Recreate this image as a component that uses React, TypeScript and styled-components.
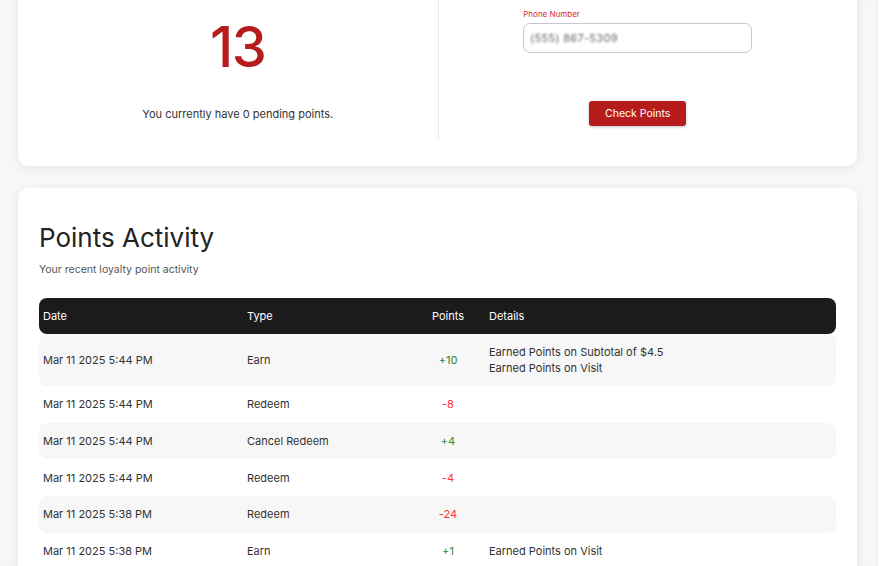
import styled, { createGlobalStyle } from 'styled-components';

const GlobalStyle = createGlobalStyle`
  html, body {
    margin: 0;
    padding: 0;
    height: 100%;
    overflow: hidden;
  }
  body {
    font-family: Inter, 'Liberation Sans', sans-serif;
    color: #333;
    background: #ffffff;
  }
`;

const Shell = styled.div`
  display: flex;
  height: 566px;
  overflow: hidden;
`;

const Page = styled.main`
  flex: 1 1 0;
  background: #f7f7f7;
  padding: 0 21px 0 18px;
  display: flex;
  flex-direction: column;
  gap: 22px;
  box-shadow: inset -1px 0 2px rgba(0, 0, 0, 0.04);
`;

const Gutter = styled.div`
  width: 16px;
  flex: none;
  background: #ffffff;
`;

const Card = styled.section<{ $cut?: boolean }>`
  background: #ffffff;
  border-radius: 10px;
  box-shadow: 0 2px 10px rgba(0, 0, 0, 0.08);
  margin-top: ${(p) => (p.$cut ? '-20px' : '0')};
  padding: ${(p) => (p.$cut ? '20px 20px 26px' : '34px 21px 24px')};
  flex: none;
`;

const SummaryGrid = styled.div`
  display: grid;
  grid-template-columns: 1fr 1fr;
`;

const Column = styled.div<{ $divider?: boolean }>`
  display: flex;
  flex-direction: column;
  align-items: center;
  height: 140px;
  box-sizing: border-box;
  border-left: ${(p) => (p.$divider ? '1px solid #ececec' : 'none')};
`;

const Balance = styled.div`
  margin-top: 19px;
  font-size: 56px;
  line-height: 56px;
  font-weight: 500;
  color: #b71c1c;
  letter-spacing: -1.5px;
`;

const Pending = styled.p`
  margin: 32px 0 0;
  font-size: 11px;
  line-height: 14px;
  color: #333;
`;

const Field = styled.label`
  margin-top: 9px;
  width: 229px;
  display: flex;
  flex-direction: column;
  gap: 4px;
`;

const FieldLabel = styled.span`
  font-size: 8px;
  line-height: 10px;
  color: #d32f2f;
`;

const Input = styled.div`
  height: 30px;
  box-sizing: border-box;
  border: 1px solid #c8c8c8;
  border-radius: 7px;
  padding: 0 6px;
  display: flex;
  align-items: center;
  font-size: 11px;
  color: #666;
`;

const Blurred = styled.span`
  filter: blur(1.3px);
  letter-spacing: 0.3px;
`;

const Button = styled.button`
  margin-top: 48px;
  width: 97px;
  height: 25px;
  border: none;
  border-radius: 3px;
  background: #b71c1c;
  color: #fff;
  font-family: inherit;
  font-size: 10.5px;
  font-weight: 400;
  box-shadow: 0 1px 3px rgba(0, 0, 0, 0.25);
`;

const Title = styled.h2`
  margin: 0;
  font-size: 26px;
  line-height: 32px;
  font-weight: 400;
  color: #222;
`;

const Subtitle = styled.p`
  margin: 9px 0 0;
  font-size: 10.5px;
  line-height: 14px;
  color: #555;
`;

const Table = styled.div`
  margin-top: 21px;
  display: flex;
  flex-direction: column;
`;

const Row = styled.div<{ $head?: boolean; $shade?: boolean }>`
  display: grid;
  grid-template-columns: 204px 168px 74px 1fr;
  align-items: center;
  min-height: ${(p) => (p.$head ? '36px' : '36.7px')};
  padding: ${(p) => (p.$head ? '0' : '10px 0')};
  box-sizing: border-box;
  border-radius: 8px;
  background: ${(p) => (p.$head ? '#1c1a1b' : p.$shade ? '#f7f7f7' : '#ffffff')};
  color: ${(p) => (p.$head ? '#ffffff' : '#333')};
  font-size: 11px;
  line-height: 16px;
`;

const Cell = styled.div<{ $center?: boolean }>`
  padding: 0 4px;
  text-align: ${(p) => (p.$center ? 'center' : 'left')};
`;

const PointsValue = styled(Cell)<{ $positive: boolean }>`
  color: ${(p) => (p.$positive ? '#2e8b2e' : '#ff3030')};
`;

type Activity = {
  date: string;
  type: string;
  points: number;
  details: string[];
};

const activity: Activity[] = [
  {
    date: 'Mar 11 2025 5:44 PM',
    type: 'Earn',
    points: 10,
    details: ['Earned Points on Subtotal of $4.5', 'Earned Points on Visit'],
  },
  { date: 'Mar 11 2025 5:44 PM', type: 'Redeem', points: -8, details: [] },
  { date: 'Mar 11 2025 5:44 PM', type: 'Cancel Redeem', points: 4, details: [] },
  { date: 'Mar 11 2025 5:44 PM', type: 'Redeem', points: -4, details: [] },
  { date: 'Mar 11 2025 5:38 PM', type: 'Redeem', points: -24, details: [] },
  { date: 'Mar 11 2025 5:38 PM', type: 'Earn', points: 1, details: ['Earned Points on Visit'] },
];

export default function App() {
  return (
    <Shell>
      <GlobalStyle />
      <Page>
        <Card $cut>
          <SummaryGrid>
            <Column>
              <Balance>13</Balance>
              <Pending>You currently have 0 pending points.</Pending>
            </Column>
            <Column $divider>
              <Field>
                <FieldLabel>Phone Number</FieldLabel>
                <Input>
                  <Blurred>(555) 867-5309</Blurred>
                </Input>
              </Field>
              <Button>Check Points</Button>
            </Column>
          </SummaryGrid>
        </Card>

        <Card>
          <Title>Points Activity</Title>
          <Subtitle>Your recent loyalty point activity</Subtitle>
          <Table>
            <Row $head>
              <Cell>Date</Cell>
              <Cell>Type</Cell>
              <Cell $center>Points</Cell>
              <Cell>Details</Cell>
            </Row>
            {activity.map((a, i) => (
              <Row key={i} $shade={i % 2 === 0}>
                <Cell>{a.date}</Cell>
                <Cell>{a.type}</Cell>
                <PointsValue $center $positive={a.points > 0}>
                  {a.points > 0 ? `+${a.points}` : a.points}
                </PointsValue>
                <Cell>
                  {a.details.map((d) => (
                    <div key={d}>{d}</div>
                  ))}
                </Cell>
              </Row>
            ))}
          </Table>
        </Card>
      </Page>
      <Gutter />
    </Shell>
  );
}
